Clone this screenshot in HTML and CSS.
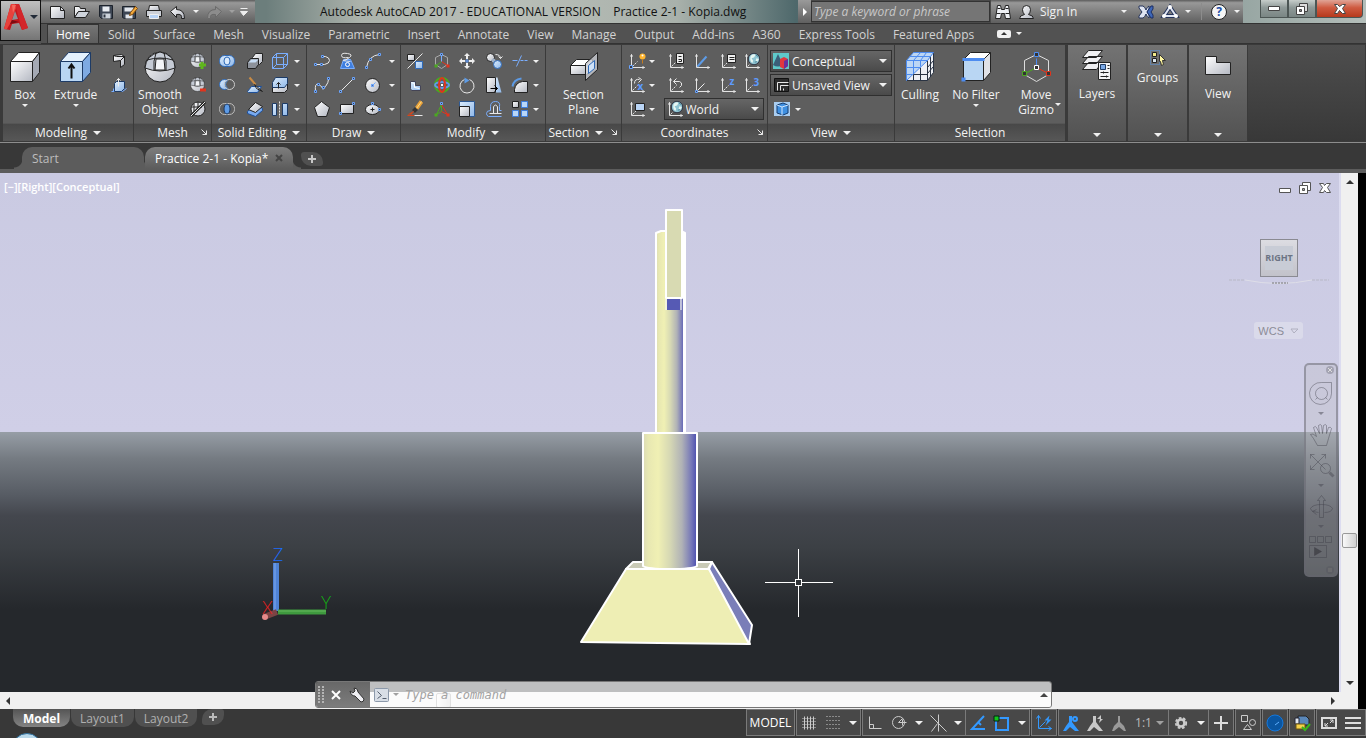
FILE: index.html
```
<!DOCTYPE html>
<html lang="en">
<head>
    <meta charset="UTF-8">
    <meta name="viewport" content="width=device-width, initial-scale=1.0">
    <title>Autodesk AutoCAD 2017</title>
    <link rel="stylesheet" href="styles.css">
</head>
<body>

<!-- shared gradients and symbols -->
<svg class="sprite" aria-hidden="true">
    <defs>
        <linearGradient id="metal" x1="0" y1="0" x2="1" y2="1"><stop offset="0" stop-color="#fff"/><stop offset="1" stop-color="#b4b8c2"/></linearGradient>
        <linearGradient id="ice" x1="0" y1="0" x2="1" y2="1"><stop offset="0" stop-color="#dcecfb"/><stop offset="1" stop-color="#8fb8ea"/></linearGradient>
        <linearGradient id="tube" x1="0" y1="0" x2="1" y2="0"><stop offset="0" stop-color="#dcdcb6"/><stop offset=".1" stop-color="#e8e8b2"/><stop offset=".28" stop-color="#f0f0b4"/><stop offset=".5" stop-color="#d6d8b4"/><stop offset=".72" stop-color="#b0b2b6"/><stop offset=".9" stop-color="#7476b8"/><stop offset="1" stop-color="#4a4db0"/></linearGradient>
        <symbol id="ucs" viewBox="0 0 16 16">
            <path d="M2 1V14H15M1 3l1-2 1 2M13 13l2 1-2 1" fill="none" stroke="#e4e4e4"/>
            <path d="M3 13l5-5" fill="none" stroke="#e4e4e4" stroke-dasharray="2 1"/>
        </symbol>
        <symbol id="globe" viewBox="0 0 16 16">
            <circle cx="8" cy="8" r="7" fill="#8fc4d2" stroke="#223"/>
            <path d="M4 4q4-3 6-1l-2 3-3 1 2 3-1 3q-4-3-2-9zM11 7l3 1-2 4-2-2z" fill="#e6f6f2"/>
            <path d="M10 3l3 2M9 12l3-1" stroke="#3e7f93" fill="none"/>
        </symbol>
        <symbol id="ball" viewBox="0 0 32 32">
            <circle cx="16" cy="16" r="15" fill="url(#metal)" stroke="#222"/>
            <path d="M1 17q15 6 30 0Q31 4 16 1 2 4 1 17z" fill="#c5cbd5" stroke="#222"/>
            <path d="M3 9q13-4 26 0M12 2q-3 8-2 17M20 2q3 8 2 17" fill="none" stroke="#222"/>
            <path d="M12 8h8l1 11H11z" fill="#f3f5f8" stroke="#222"/>
        </symbol>
    </defs>
</svg>

<div class="app">

<header class="header">
    <button class="app-button" aria-label="Application menu">
        <svg width="24" height="28" viewBox="0 0 24 28">
            <path d="M0 26L7 1h8l9 24-6 2-3-7-7 1-2 6z" fill="#c3161c"/>
            <path d="M7 1l4 0 1 4-5 14-4 7-3 0z" fill="#e8413b"/>
            <path d="M11 8l3 8-6 1z" fill="#8e9094"/>
            <path d="M11 1h4l9 24-6 2z" fill="#d3262a"/>
            <path d="M6 21l9-2-7-2z" fill="#7b0c10"/>
            <path d="M8 2l4 0-3 8z" fill="#f46a5f"/>
        </svg>
        <span class="caret dark"></span>
    </button>

    <div class="titlebar">
        <div class="quick">
            <button aria-label="New"><svg width="16" height="16" viewBox="-.5 -.5 16 16"><path d="M0 2h10l4 4v8H0z" class="m"/><path d="M10 2v4h4" class="k"/></svg></button>
            <button aria-label="Open"><svg width="16" height="16" viewBox="-.5 -.5 16 16"><path d="M0 13V2h5l1 2h5v3H4z" class="m"/><path d="M0 13L4 7h11l-4 6z" fill="#cfd4dc" stroke="#222"/></svg></button>
            <button aria-label="Save"><svg width="16" height="16" viewBox="-.5 -.5 16 16"><path d="M1 1h13v13H3l-2-2z" fill="#3d4654" stroke="#1c222b"/><path d="M4 2h7v5H4z" fill="#e8ebf0"/><path d="M4 9h8v5H4z" fill="#cdd3db"/><path d="M5 10h2v3H5z" fill="#2d3440"/></svg></button>
            <button aria-label="Save As"><svg width="16" height="16" viewBox="-.5 -.5 16 16"><path d="M0 2h13v12H2l-2-1z" fill="#3d4654" stroke="#1c222b"/><path d="M2 3h9v4H2zM3 10h7v4H3z" fill="#e2e6ec"/><path d="M7 11l1-3 5-6 2 2-5 6z" fill="#f2a93b" stroke="#7d4a10"/></svg></button>
            <button aria-label="Plot"><svg width="16" height="16" viewBox="-.5 -.5 16 16"><path d="M3 1h9l1 5H2z" class="m"/><path d="M0 6h15v6H0z" fill="#cdd1d8" stroke="#222"/><path d="M3 10h9v4H3z" fill="#b9d4f5" stroke="#eee"/></svg></button>
            <button aria-label="Undo"><svg width="16" height="16" viewBox="-.5 -.5 16 16"><path d="M0 7l6-5v3q8 0 8 9h-3q1-5-5-4v3z" class="m"/></svg></button>
            <button class="slim" aria-label="Undo list"><span class="caret"></span></button>
            <button aria-label="Redo"><svg width="16" height="16" viewBox="-.5 -.5 16 16"><path d="M15 7L9 2v3Q1 5 1 14h3q-1-5 5-4v3z" fill="#8c8c8c" stroke="#6a6a6a"/></svg></button>
            <button class="slim" aria-label="Redo list"><span class="caret dim"></span></button>
            <button class="slim" aria-label="Customize"><svg width="10" height="10" viewBox="-.5 -.5 10 10"><path d="M1 1h7M1 4h7L4 8z" fill="#eee" stroke="#eee"/></svg></button>
        </div>
        <h1 class="title">Autodesk AutoCAD 2017 - EDUCATIONAL VERSION &nbsp;&nbsp; Practice 2-1 - Kopia.dwg</h1>
        <div class="search">
            <button aria-label="Collapse search"><svg width="6" height="8" viewBox="0 0 6 8"><path d="M1 0l4 4-4 4z" fill="#fff"/></svg></button>
            <input type="text" aria-label="Search" placeholder="Type a keyword or phrase">
        </div>
        <div class="account">
            <button aria-label="Find"><svg width="16" height="16" viewBox="-.5 -.5 16 16"><path d="M2 1h3l1 4h3l1-4h3l2 13h-5l-1-5H6l-1 5H0z" fill="#eef0f4" stroke="#222"/><path d="M1 9h4M10 9h4M2 4h3M10 4h3" class="k"/></svg></button>
            <button class="sign-in"><svg width="16" height="16" viewBox="-.5 -.5 16 16"><path d="M0 14q0-3 5-4-2-2-2-5 0-4 4-4t4 4q0 3-2 5 5 1 5 4z" class="m"/></svg>Sign In</button>
            <button class="slim push" aria-label="Account menu"><span class="caret"></span></button>
            <button aria-label="Exchange"><svg width="16" height="14" viewBox="0 0 16 14"><path d="M1 1h4q2 1 3 4 1-3 3-4v3L9 7l2 3v3q-2-1-3-4-1 3-3 4H1v-2l3-4-3-4z" fill="#dfe5f2" stroke="#26355c"/><path d="M9 7l4-6h2v3l-2 3 2 3v3h-2z" fill="#3e67b8" stroke="#1d2f63"/></svg></button>
            <button aria-label="A360"><svg width="16" height="14" viewBox="0 0 16 14"><path d="M8 2L2 11h12z" fill="none" stroke="#26355c" stroke-width="4"/><path d="M8 2L2 11h12z" fill="none" stroke="#dfe5f2" stroke-width="2"/><circle cx="8" cy="2" r="2" fill="#fff"/><circle cx="2" cy="11" r="2" fill="#fff"/><circle cx="14" cy="11" r="2" fill="#fff"/></svg></button>
            <button class="slim" aria-label="A360 menu"><span class="caret"></span></button>
            <span class="divider"></span>
            <button class="help" aria-label="Help">?</button>
            <button class="slim" aria-label="Help menu"><span class="caret"></span></button>
        </div>
        <div class="window-buttons">
            <button aria-label="Minimize"><svg width="12" height="6" viewBox="-.5 -.5 12 6"><path d="M0 0h11v4H0z" fill="#fff" stroke="#444"/></svg></button>
            <button aria-label="Restore"><svg width="12" height="12" viewBox="-.5 -.5 12 12"><path d="M3 0h8v8H3z" fill="#ddd" stroke="#444"/><path d="M0 3h8v8H0z" fill="#fff" stroke="#444"/><path d="M3 6h2v2H3z" fill="#888" stroke="#444"/></svg></button>
            <button class="close" aria-label="Close"><svg width="12" height="10" viewBox="-.5 -.5 12 10"><path d="M0 0h3l2 2 3-2h3L8 4l3 5H8L5 6 3 9H0l3-5z" fill="#fff" stroke="#444"/></svg></button>
        </div>
    </div>

    <nav class="tabs">
        <a href="#" class="active">Home</a>
        <a href="#">Solid</a>
        <a href="#">Surface</a>
        <a href="#">Mesh</a>
        <a href="#">Visualize</a>
        <a href="#">Parametric</a>
        <a href="#">Insert</a>
        <a href="#">Annotate</a>
        <a href="#">View</a>
        <a href="#">Manage</a>
        <a href="#">Output</a>
        <a href="#">Add-ins</a>
        <a href="#">A360</a>
        <a href="#">Express Tools</a>
        <a href="#">Featured Apps</a>
        <button class="minimize" aria-label="Minimize ribbon"><svg width="14" height="8" viewBox="0 0 14 8"><rect width="14" height="8" rx="2" fill="#f0f0f0"/><path d="M4 5l3-3 3 3z" fill="#333"/></svg><span class="caret"></span></button>
    </nav>
</header>

<main class="ribbon">
    <section class="panel">
        <div class="body modeling">
            <button class="big"><svg width="32" height="32" viewBox="-.5 -.5 32 32"><path d="M1 10L9 1h21l-7 9z" fill="#fff" stroke="#222"/><path d="M1 10h22v20H1z" class="m"/><path d="M23 10l7-9v20l-7 9z" fill="#a4a9b4" stroke="#222"/></svg><span>Box</span><span class="caret"></span></button>
            <button class="big"><svg width="32" height="32" viewBox="-.5 -.5 32 32"><path d="M0 10L8 1h22l-8 9z" fill="#e4f1fd" stroke="#1d3b66"/><path d="M0 10h22v20H0z" fill="#b9d6f3" stroke="#1d3b66"/><path d="M22 10l8-9v20l-8 9z" fill="#7eaae2" stroke="#1d3b66"/><path d="M11 27V14M8 17l3-4 3 4" fill="none" stroke="#111" stroke-width="2"/></svg><span>Extrude</span><span class="caret"></span></button>
            <div class="tools one">
                <button aria-label="Polysolid"><svg width="16" height="16" viewBox="-.5 -.5 16 16"><path d="M2 2l8-1 3 2v8l-4 3V7L2 8z" class="m"/><path d="M2 2l3 1 8 0M9 7l4-4" class="k"/></svg></button>
                <button aria-label="Presspull"><svg width="16" height="16" viewBox="-.5 -.5 16 16"><path d="M0 14h11l4-3M2 14v-3" class="b"/><path d="M3 6l2-2h8v7l-3 3H3z" fill="url(#ice)" stroke="#1d3b66"/><path d="M7 9V1M5 3l2-2 2 2" class="l"/></svg></button>
            </div>
        </div>
        <h2>Modeling <span class="caret wide"></span></h2>
    </section>

    <section class="panel">
        <div class="body mesh">
            <button class="big"><svg width="32" height="32"><use href="#ball"/></svg><span>Smooth Object</span></button>
            <div class="tools one">
                <button aria-label="Smooth more"><svg width="16" height="16" viewBox="0 0 16 16"><use href="#ball" width="15" height="15"/><path d="M12 9v7M9 12h7" stroke="#5fb61c" stroke-width="3"/></svg></button>
                <button aria-label="Smooth less"><svg width="16" height="16" viewBox="0 0 16 16"><use href="#ball" width="15" height="15"/><path d="M10 13h6" stroke="#e0341d" stroke-width="3"/></svg></button>
                <button aria-label="Refine mesh"><svg width="16" height="16" viewBox="0 0 16 16"><circle cx="8" cy="8" r="7" class="m"/><path d="M4 3v10M8 1v7M2 6h10" class="k"/><path d="M1 15L15 1" stroke="#222" stroke-width="3"/><path d="M1 15L15 1" class="l"/></svg></button>
            </div>
        </div>
        <h2 class="spread"><span>Mesh</span><svg width="7" height="7" viewBox="-.5 -.5 7 7"><path d="M0 0l5 5M5 1v4H1" class="l"/></svg></h2>
    </section>

    <section class="panel">
        <div class="body tools solid">
            <button aria-label="Union"><svg width="16" height="16" viewBox="-.5 -.5 16 16"><rect x="0" y="2" width="15" height="11" rx="5" fill="url(#ice)" stroke="#2f6ab8"/><ellipse cx="7.5" cy="7.5" rx="3" ry="4" fill="#dcebfb" stroke="#2f6ab8"/></svg></button>
            <button aria-label="Imprint"><svg width="16" height="16" viewBox="-.5 -.5 16 16"><path d="M5 4l3-4h7v8l-3 3H5z" class="m"/><path d="M0 9l3-4h8v6l-3 4H0z" fill="#8d929b" stroke="#222"/><path d="M1 9l3-3h7L8 9z" fill="#c8ddf5"/></svg></button>
            <button aria-label="Extract edges"><svg width="16" height="16" viewBox="-.5 -.5 16 16"><path d="M0 4h11v11H0zM4 0h11v11H4zM0 4l4-4M11 4l4-4M0 15l4-4M11 15l4-4" class="b"/></svg></button>
            <button aria-label="More solid tools"><span class="caret"></span></button>
            <button aria-label="Subtract"><svg width="16" height="16" viewBox="-.5 -.5 16 16"><circle cx="5" cy="7" r="5" fill="url(#ice)" stroke="#2f6ab8"/><circle cx="10" cy="7" r="5" fill="#5c5c5c" stroke="#ccc"/><path d="M8 3q-4 4 0 8" stroke="#5d9be6" fill="none"/></svg></button>
            <button aria-label="Slice"><svg width="16" height="16" viewBox="-.5 -.5 16 16"><path d="M0 14l4-5h10l-4 6H1z" fill="url(#ice)" stroke="#1d4f99"/><path d="M2 0l6 7" stroke="#c98b45" stroke-width="2"/><path d="M7 7l8 7-6-3z" class="m"/></svg></button>
            <button aria-label="Offset faces"><svg width="16" height="16" viewBox="-.5 -.5 16 16"><path d="M0 8l3-3h12v7l-3 3H0z" class="m"/><path d="M0 5l3-5h12v6l-3 4H0z" fill="url(#ice)" stroke="#1d3b66"/><path d="M6 11V5M4 7l2-2 2 2" class="k"/></svg></button>
            <button aria-label="Face tools"><span class="caret"></span></button>
            <button aria-label="Intersect"><svg width="16" height="16" viewBox="-.5 -.5 16 16"><rect x="0" y="2" width="15" height="11" rx="5" fill="none" stroke="#bbb"/><ellipse cx="7.5" cy="7.5" rx="3" ry="5" fill="#5d9be6" stroke="#1d3b66"/></svg></button>
            <button aria-label="Thicken"><svg width="16" height="16" viewBox="-.5 -.5 16 16"><path d="M0 10l8-7 7 4v2l-7 6-8-3z" fill="#78aaf0" stroke="#1d4f99"/><path d="M1 8l7-7 7 4-7 6z" class="m"/></svg></button>
            <button aria-label="Separate"><svg width="16" height="16" viewBox="-.5 -.5 16 16"><path d="M0 2h4v12H0zM10 2h5v12h-5z" fill="url(#ice)" stroke="#1d3b66"/><path d="M7 0v16" class="l" stroke-dasharray="2 1"/></svg></button>
            <button aria-label="Body tools"><span class="caret"></span></button>
        </div>
        <h2>Solid Editing <span class="caret wide"></span></h2>
    </section>

    <section class="panel">
        <div class="body tools draw">
            <button aria-label="Polyline"><svg width="16" height="16" viewBox="-.5 -.5 16 16"><path d="M1 11h9q5-1 5-4t-4-4H8" class="l"/><path d="M0 10h2v2H0zM6 10h2v2H6zM7 2h2v2H7z" class="n"/></svg></button>
            <button aria-label="Helix"><svg width="16" height="16" viewBox="-.5 -.5 16 16"><path d="M4 6h7l4 9H1z" fill="#3f7fe0" stroke="#7aaeff"/><circle cx="8" cy="11" r="2" fill="none" stroke="#fff"/><path d="M9 4Q2 5 2 2t6-2 2 4-6 3 7 1" class="l"/></svg></button>
            <button aria-label="Arc"><svg width="16" height="16" viewBox="-.5 -.5 16 16"><path d="M1 14Q3 2 14 1" class="l"/><path d="M0 13h2v2H0zM4 5h2v2H4zM13 0h2v2h-2z" class="n"/></svg></button>
            <button aria-label="Arc list"><span class="caret"></span></button>
            <button aria-label="Spline"><svg width="16" height="16" viewBox="-.5 -.5 16 16"><path d="M1 14Q0 5 4 7t4 4 3-2 3-7" class="l"/><path d="M0 13h2v2H0zM3 6h2v2H3zM8 9h2v2H8zM13 0h2v2h-2z" class="n"/></svg></button>
            <button aria-label="Line"><svg width="16" height="16" viewBox="-.5 -.5 16 16"><path d="M1 14L14 1" class="l"/><path d="M0 13h2v2H0zM13 0h2v2h-2z" class="n"/></svg></button>
            <button aria-label="Circle"><svg width="16" height="16" viewBox="-.5 -.5 16 16"><circle cx="7" cy="8" r="7" class="m"/><path d="M7 8l3-3M6 7h2v2H6z" class="n"/></svg></button>
            <button aria-label="Circle list"><span class="caret"></span></button>
            <button aria-label="Polygon"><svg width="16" height="16" viewBox="-.5 -.5 16 16"><path d="M7 0l8 6-3 9H3L0 6z" class="m"/></svg></button>
            <button aria-label="Rectangle"><svg width="16" height="16" viewBox="-.5 -.5 16 16"><path d="M1 3h13v9H1z" class="m"/><path d="M0 11h2v2H0zM13 1h2v2h-2z" class="n"/></svg></button>
            <button aria-label="Ellipse"><svg width="16" height="16" viewBox="-.5 -.5 16 16"><ellipse cx="7" cy="8" rx="7" ry="5" class="m"/><path d="M5 8h4M7 6v4" class="k"/><path d="M6 1h2v2H6zM13 7h2v2h-2z" class="n"/></svg></button>
            <button aria-label="Ellipse list"><span class="caret"></span></button>
        </div>
        <h2>Draw <span class="caret wide"></span></h2>
    </section>

    <section class="panel">
        <div class="body tools modify">
            <button aria-label="3D align"><svg width="16" height="16" viewBox="-.5 -.5 16 16"><path d="M0 1h7v6H0z" class="m"/><path d="M8 8h7v7H8z" fill="url(#ice)" stroke="#2f6ab8"/><path d="M0 15L15 0" class="l"/></svg></button>
            <button aria-label="3D move"><svg width="16" height="16" viewBox="-.5 -.5 16 16"><path d="M7 1l6 3v7l-6 4-6-4V4z" fill="none" stroke="#aaa"/><path d="M7 8l-5 4" stroke="#4ba820"/><path d="M7 8l6 4" stroke="#e0341d"/><path d="M7 8V2" stroke="#7aaeff"/><path d="M6 0h2v2H6z" class="n"/><path d="M0 11h3v3H0z" fill="#4ba820"/><path d="M12 11h3v3h-3z" fill="#e0341d"/></svg></button>
            <button aria-label="Move"><svg width="16" height="16" viewBox="0 0 16 16"><path d="M8 0l3 3H9v3H7V3H5zM8 16l3-3H9v-3H7v3H5zM0 8l3-3v2h3v2H3v2zM16 8l-3-3v2h-3v2h3v2z" fill="#eee"/><path d="M7 7h2v2H7z" class="n"/></svg></button>
            <button aria-label="Copy"><svg width="16" height="16" viewBox="-.5 -.5 16 16"><circle cx="4" cy="4" r="4" class="m"/><circle cx="7" cy="7" r="2" fill="#9fb0c6"/><circle cx="11" cy="11" r="4" fill="url(#ice)" stroke="#2f6ab8"/><path d="M9 1q5 0 5 4M12 3l2 2 2-2" class="l"/></svg></button>
            <button aria-label="Trim"><svg width="16" height="16" viewBox="-.5 -.5 16 16"><path d="M0 7h5M4 13L9 2" class="b"/><path d="M8 7h8" class="b" stroke-dasharray="3 1"/></svg></button>
            <button aria-label="Trim list"><span class="caret"></span></button>
            <button aria-label="3D mirror"><svg width="16" height="16" viewBox="-.5 -.5 16 16"><path d="M3 4h5v4h5v5H4l-1-2z" fill="url(#ice)" stroke="#445"/><path d="M4 5l3 1v4l5 1" stroke="#fff" fill="none"/></svg></button>
            <button aria-label="3D rotate"><svg width="16" height="16" viewBox="0 0 16 16"><circle cx="8" cy="8" r="7" fill="none" stroke="#4ba820" stroke-width="2"/><ellipse cx="8" cy="8" rx="7" ry="3" fill="none" stroke="#5d9be6" stroke-width="2"/><ellipse cx="8" cy="8" rx="3" ry="7" fill="none" stroke="#e0341d" stroke-width="2"/><path d="M7 7h2v2H7z" fill="#fff"/></svg></button>
            <button aria-label="Rotate"><svg width="16" height="16" viewBox="-.5 -.5 16 16"><path d="M5 2a7 7 0 1 0 5 0" class="l"/><path d="M5 0l5 3-5 3z" fill="#5d9be6"/></svg></button>
            <button aria-label="Stretch"><svg width="16" height="16" viewBox="-.5 -.5 16 16"><path d="M8 0h3l4 15H8z" fill="url(#ice)"/><path d="M0 0h9v15H0z" class="m"/><path d="M4 11h7M8 8l3 3-3 3" stroke="#000" fill="none"/></svg></button>
            <button aria-label="Fillet"><svg width="16" height="16" viewBox="-.5 -.5 16 16"><path d="M2 15V12q1-7 8-8h5v11z" class="m"/><path d="M0 9q1-7 9-8" stroke="#5d9be6" fill="none" stroke-width="2"/></svg></button>
            <button aria-label="Fillet list"><span class="caret"></span></button>
            <button aria-label="Erase"><svg width="16" height="16" viewBox="-.5 -.5 16 16"><path d="M14 0L9 7" stroke="#e9a13a" stroke-width="4"/><path d="M14 0L9 7" stroke="#ffe08a"/><path d="M9 7l-3 3" stroke="#333" stroke-width="4"/><path d="M7 9l-3 4H0z" fill="#d6451b"/><path d="M0 14h7" stroke="#d6451b"/><path d="M7 14h8" class="l"/></svg></button>
            <button aria-label="3D scale"><svg width="16" height="16" viewBox="-.5 -.5 16 16"><path d="M7 3v7l-5 3M7 3L2 13" stroke="#4ba820" fill="none"/><path d="M7 3l6 10-6-3" stroke="#e0341d" fill="none"/><path d="M6 1h2v2H6z" class="n"/><path d="M0 12h3v3H0z" fill="#4ba820"/><path d="M12 12h3v3h-3z" fill="#e0341d"/></svg></button>
            <button aria-label="Scale"><svg width="16" height="16" viewBox="-.5 -.5 16 16"><path d="M0 0h15v15H0z" fill="url(#ice)" stroke="#2f5a94"/><path d="M0 5h10v10H0z" class="m"/></svg></button>
            <button aria-label="Offset"><svg width="16" height="16" viewBox="-.5 -.5 16 16"><path d="M15 15H2q-2-1-2-3 0-3 4-3V5q0-5 5-5t4 5v4h2" class="b"/><path d="M15 12H3M7 12V5q2-3 4 0v7" class="l"/></svg></button>
            <button aria-label="Array"><svg width="16" height="16" viewBox="-.5 -.5 16 16"><path d="M0 0h6v6H0z" class="m"/><path d="M9 0h6v6H9zM0 9h6v6H0zM9 9h6v6H9z" fill="#b9d6f8" stroke="#3f7fe0"/></svg></button>
            <button aria-label="Array list"><span class="caret"></span></button>
        </div>
        <h2>Modify <span class="caret wide"></span></h2>
    </section>

    <section class="panel">
        <div class="body section">
            <button class="big"><svg width="32" height="32" viewBox="-.5 -.5 32 32"><path d="M2 14l6-6h16v10l-6 5H2z" fill="#fff" stroke="#222"/><path d="M2 14h15v9H2z" class="m"/><path d="M17 12L29 1v17L17 29z" fill="#c9ccd2" fill-opacity=".8" stroke="#222"/><path d="M20 14l6-5v8l-6 5z" fill="#cfe2f8" stroke="#2f6ab8"/></svg><span>Section Plane</span></button>
        </div>
        <h2>Section <span class="caret wide"></span><svg class="launcher" width="7" height="7" viewBox="-.5 -.5 7 7"><path d="M0 0l5 5M5 1v4H1" class="l"/></svg></h2>
    </section>

    <section class="panel">
        <div class="body tools coords">
            <button aria-label="UCS"><svg width="16" height="16" viewBox="-.5 -.5 16 16"><use href="#ucs" width="16" height="16"/><path d="M0 12h3v3H0z" class="n"/><circle cx="13" cy="3" r="3" fill="#ffb52e"/><circle cx="13" cy="2" r="1" fill="#fff"/><path d="M13 6v4" stroke="#c67b1e"/></svg></button>
            <button class="start" aria-label="UCS list"><span class="caret"></span></button>
            <button aria-label="Named UCS"><svg width="16" height="16" viewBox="-.5 -.5 16 16"><use href="#ucs" width="16" height="16"/><path d="M8 0h7v10H8z" fill="#eee" stroke="#222"/><path d="M10 3h3M10 6h3v2h-3" class="k"/></svg></button>
            <button aria-label="View UCS"><svg width="16" height="16" viewBox="-.5 -.5 16 16"><use href="#ucs" width="16" height="16"/><path d="M3 13L12 3" stroke="#5d9be6" stroke-width="2"/></svg></button>
            <button aria-label="UCS properties"><svg width="16" height="16" viewBox="-.5 -.5 16 16"><use href="#ucs" width="16" height="16"/><path d="M7 1h8v8H7z" fill="#eee" stroke="#222"/><path d="M9 4h5M9 6h5" class="k"/></svg></button>
            <button aria-label="World UCS"><svg width="16" height="16" viewBox="-.5 -.5 16 16"><use href="#ucs" width="16" height="16"/><use href="#globe" x="3" y="-1" width="13" height="13"/></svg></button>
            <button aria-label="Rotate X"><svg width="16" height="16" viewBox="-.5 -.5 16 16"><use href="#ucs" width="16" height="16"/><path d="M5 6q0-5 5-4M9 0l3 2-3 3" class="l"/><text x="8" y="12" class="t">x</text></svg></button>
            <button class="start" aria-label="Rotate list"><span class="caret"></span></button>
            <button aria-label="Previous UCS"><svg width="16" height="16" viewBox="-.5 -.5 16 16"><use href="#ucs" width="16" height="16"/><path d="M5 4h6q3 1 2 4l-2 2M8 1L5 4l3 3" class="l"/></svg></button>
            <button aria-label="Origin"><svg width="16" height="16" viewBox="-.5 -.5 16 16"><use href="#ucs" width="16" height="16"/><path d="M3 13l7-7" stroke="#eee"/><path d="M1 13h2v2H1z" class="n"/></svg></button>
            <button aria-label="Z axis vector"><svg width="16" height="16" viewBox="-.5 -.5 16 16"><use href="#ucs" width="16" height="16"/><text x="9" y="7" class="t">z</text></svg></button>
            <button aria-label="3-Point"><svg width="16" height="16" viewBox="-.5 -.5 16 16"><use href="#ucs" width="16" height="16"/><text x="9" y="8" class="t">3</text></svg></button>
            <button aria-label="Face UCS"><svg width="16" height="16" viewBox="-.5 -.5 16 16"><use href="#ucs" width="16" height="16"/><path d="M6 2h9v7H6z" fill="#b9d4f5" stroke="#222"/></svg></button>
            <button class="start" aria-label="Face list"><span class="caret"></span></button>
            <div class="combo world">
                <svg width="16" height="16" viewBox="-.5 -.5 16 16"><use href="#ucs" width="16" height="16"/><use href="#globe" x="3" y="-1" width="13" height="13"/></svg>
                <select aria-label="Current UCS"><option>World</option></select>
                <span class="caret wide"></span>
            </div>
        </div>
        <h2 class="spread"><span>Coordinates</span><svg width="7" height="7" viewBox="-.5 -.5 7 7"><path d="M0 0l5 5M5 1v4H1" class="l"/></svg></h2>
    </section>

    <section class="panel">
        <div class="body view">
            <div class="combo">
                <svg width="16" height="16" viewBox="0 0 16 16"><path d="M0 0h16v16H0z" fill="#5fc9c9"/><path d="M5 1l5 11q-5 3-10 0z" fill="#3b5f78"/><path d="M7 6l4-2 4 2v7l-4 3-4-2z" fill="#e0383e"/><path d="M11 8l4-2v7l-4 3z" fill="#6a2f9c"/></svg>
                <select aria-label="Visual style"><option>Conceptual</option></select>
                <span class="caret wide"></span>
            </div>
            <div class="combo">
                <svg width="16" height="16" viewBox="-.5 -.5 16 16"><path d="M1 1h14v13H1z" fill="#2c2c2c" stroke="#111"/><path d="M4 13V5h11M7 13V8h8M10 13v-2" class="l"/></svg>
                <select aria-label="Saved view"><option>Unsaved View</option></select>
                <span class="caret wide"></span>
            </div>
            <div class="view-row">
                <button aria-label="Viewport"><svg width="16" height="14" viewBox="0 0 16 14"><path d="M0 0h16v14H0z" fill="#a9cdf0"/><path d="M3 3l6-2 5 2v8l-5 2-6-2z" fill="#3e8fe0" stroke="#153d70"/><path d="M3 3l5 2 6-2M8 5v8" stroke="#cfe6ff" fill="none"/></svg></button>
                <span class="caret"></span>
            </div>
        </div>
        <h2>View <span class="caret wide"></span></h2>
    </section>

    <section class="panel">
        <div class="body selection">
            <button class="big"><svg width="32" height="32" viewBox="-.5 -.5 32 32"><path d="M2 9L9 1h20l-6 8v20H2z" fill="#bcd6f4"/><path d="M2 29L23 9l6-8v20l-6 8z" fill="#eef0f4"/><path d="M9 22v7M16 16v13M23 9v20M2 29h21M9 23h14M23 22l6-7M29 1v20l-6 8M26 5v20M23 16l6-7" fill="none" stroke="#2a3342"/><path d="M2 9h21M2 9v20M2 16h14M2 23h6M9 9v13M16 9v6M2 9L9 1h20l-6 8M9 9l7-8M16 9l6-8M5 5h21M2 29L23 9" fill="none" stroke="#4d8cf0"/></svg><span>Culling</span></button>
            <button class="big"><svg width="32" height="32" viewBox="-.5 -.5 32 32"><path d="M3 8l7-7h20l-7 7z" fill="#fff" stroke="#222"/><path d="M3 8h20v21H3z" fill="#b9d6f3" stroke="#222"/><path d="M23 8l7-7v20l-7 8z" fill="#dfe1e6" stroke="#222"/><path d="M2 8h22" stroke="#4d8cf0" stroke-width="3"/><path d="M1 26h4v4H1z" fill="#4d8cf0"/></svg><span>No Filter</span><span class="caret"></span></button>
            <button class="big gizmo"><svg width="32" height="32" viewBox="-.5 -.5 32 32"><path d="M16 3l12 6v14l-12 7L4 23V9z" fill="none" stroke="#ddd"/><path d="M16 16v-9" stroke="#4d8cf0"/><path d="M16 16L5 22" stroke="#4ba820"/><path d="M16 16l12 6" stroke="#e0341d"/><path d="M14 1h4v4h-4z" fill="#333" stroke="#4d8cf0"/><path d="M2 20h4v4H2z" fill="#333" stroke="#4ba820"/><path d="M26 20h4v4h-4z" fill="#333" stroke="#e0341d"/><path d="M14 14h4v4h-4z" fill="#333" stroke="#fff"/></svg><span>Move Gizmo</span></button>
            <span class="caret gizmo-caret"></span>
        </div>
        <h2>Selection</h2>
    </section>

    <button class="folded"><svg width="30" height="32" viewBox="-.5 -.5 30 32"><path d="M0 19l6-7h14l-6 7zM0 13l6-7h14l-6 7zM0 7l6-7h14l-6 7z" fill="#f0f0f2" stroke="#222"/><path d="M16 12h12v17H16z" fill="#f4f4f6" stroke="#222"/><path d="M18 14h5v5h-5z" fill="#7aa9e8" stroke="#1d3b66"/><path d="M25 15h2M25 18h2M18 22h8M18 26h8M21 21v2M24 25v2" class="k"/></svg><span>Layers</span><span class="caret wide"></span></button>
    <button class="folded"><svg width="16" height="16" viewBox="-.5 -.5 16 16"><path d="M0 0h9v14H0z" fill="none" stroke="#5d9be6" stroke-dasharray="1 1"/><path d="M2 2h4v4H2z" fill="#f4ec8a" stroke="#222"/><path d="M2 8h4v4H2z" fill="#dce8f2" stroke="#222"/><path d="M9 4l6 6h-3l1 4-2 1-1-4H9z" fill="#fff7a0" stroke="#333"/></svg><span>Groups</span><span class="caret wide"></span></button>
    <button class="folded"><svg width="28" height="32" viewBox="-.5 -.5 28 32"><path d="M1 6h11v6h14v12H1z" class="m"/></svg><span>View</span><span class="caret wide"></span></button>
    <div class="rest"></div>
</main>

<nav class="doc-tabs">
    <button class="doc start-tab">Start</button>
    <button class="doc current">Practice 2-1 - Kopia* <svg width="8" height="8" viewBox="0 0 8 8"><path d="M1 1l6 6M7 1L1 7" stroke="#444" stroke-width="2"/></svg></button>
    <button class="add" aria-label="New tab"><svg width="8" height="8" viewBox="0 0 8 8"><path d="M4 0v8M0 4h8" stroke="#c8c8c8" stroke-width="2"/></svg></button>
</nav>

<div class="workspace">
    <div class="viewport">
        <svg class="scene" viewBox="0 0 1339 519" preserveAspectRatio="xMidYMid meet" role="img" aria-label="3D model">
            <!-- model -->
            <g stroke="#fff" stroke-width="2" stroke-linejoin="round">
                <path d="M656 260V60l5-2h20l4 2V260z" fill="url(#tube)"/>
                <path d="M684 60V260" fill="none"/>
                <path d="M666 37h16v88h-16z" fill="#d8dab2"/>
                <path d="M626 396l7-7h79l-4 7z" fill="#c9cab6"/>
                <path d="M643 260h54v133q-4 3-27 3t-27-3z" fill="url(#tube)"/>
                <path d="M626 396h83l41 75-1 0-90-1-78-1z" fill="#eeeeb4"/>
                <path d="M709 396l3-7 40 63-3 19z" fill="#7a7eb8"/>
            </g>
            <path d="M667 126h13v11h-13z" fill="#565ab4"/>
            <path d="M681 126v11M666 126v11" stroke="#fff"/>
            <!-- crosshair -->
            <g fill="none" stroke="#fff" shape-rendering="crispEdges">
                <path d="M765 409.5h30M802 409.5h31M798.5 376v30M798.5 413v31"/>
                <path d="M795.5 406.5h6v6h-6z"/>
            </g>
            <!-- ucs icon -->
            <path d="M276 390v48" stroke="#4f83d6" stroke-width="6"/>
            <path d="M275 390v48" stroke="#7ea8ee" stroke-width="1"/>
            <path d="M278 439h48" stroke="#3f9a3f" stroke-width="5"/>
            <path d="M278 438h48" stroke="#66b85e" stroke-width="1"/>
            <path d="M277 439l-13 5" stroke="#7c4444" stroke-width="6"/>
            <circle cx="265" cy="444" r="3" fill="#e58a8a"/>
            <text x="273" y="388" class="axis" fill="#1a6dff">Z</text>
            <text x="321" y="436" class="axis" fill="#12b312">Y</text>
            <text x="262" y="441" class="axis" fill="#e82020">X</text>
        </svg>
        <div class="view-label">[−][Right][Conceptual]</div>
        <div class="view-buttons">
            <button aria-label="Minimize view"><svg width="14" height="12" viewBox="-.5 -.5 14 12"><path d="M1 6h11v4H1z" fill="#fff" stroke="#555"/></svg></button>
            <button aria-label="Restore view"><svg width="14" height="12" viewBox="-.5 -.5 14 12"><path d="M4 0h8v8H4z" fill="#fff" stroke="#555"/><path d="M1 3h8v8H1z" fill="#fff" stroke="#555"/><path d="M4 6h2v2H4z" fill="#aaa" stroke="#555"/></svg></button>
            <button aria-label="Close view"><svg width="14" height="12" viewBox="-.5 -.5 14 12"><path d="M1 1h4l1 2 2-2h4L9 5l3 5H8L6 8l-1 2H1l3-5z" fill="#fff" stroke="#555"/></svg></button>
        </div>
        <div class="cube-area">
            <button class="cube"><span>RIGHT</span></button>
            <svg class="compass" width="102" height="10" viewBox="0 0 102 10"><path d="M1 3h16M84 3h17" stroke="#b8b8c6" stroke-dasharray="3 1"/><path d="M17 3q34 7 67 0" stroke="#dedee8" fill="none"/><path d="M44 6h16" stroke="#777" stroke-dasharray="2 1"/></svg>
        </div>
        <button class="wcs">WCS <svg width="9" height="6" viewBox="0 0 9 6"><path d="M1 1h7L4 5z" fill="none" stroke="#b0b0c0"/></svg></button>
        <div class="navbar">
            <button class="dot" aria-label="Close bar"><svg width="8" height="8" viewBox="0 0 8 8"><circle cx="4" cy="4" r="4"/><path d="M2 2l4 4M6 2L2 6" stroke="#ddd"/></svg></button>
            <button aria-label="Steering wheel"><svg width="24" height="24" viewBox="-.5 -.5 24 24"><path d="M12 1h10v11a11 11 0 1 1-10-11z"/><circle cx="12" cy="12" r="6"/><path d="M6 18l2-2M18 18l-2-2"/></svg></button>
            <span class="caret"></span>
            <button aria-label="Pan"><svg width="24" height="24" viewBox="-.5 -.5 24 24"><path d="M8 23l-4-7-3-4q2-2 6 2L4 5q2-2 3 0l3 6-1-8q2-2 3 0l1 8 1-8q2-2 3 0v8l2-6q2-1 3 1l-3 10-2 7z"/></svg></button>
            <button aria-label="Zoom"><svg width="24" height="24" viewBox="-.5 -.5 24 24"><path d="M1 1l15 15M1 16L16 1M1 5V1h4M12 1h4v4M1 12v4h4"/><circle cx="16" cy="15" r="5"/><path d="M20 19l4 4" stroke-width="3"/></svg></button>
            <span class="caret"></span>
            <button aria-label="Orbit"><svg width="24" height="24" viewBox="-.5 -.5 24 24"><path d="M10 23V6H8l4-5 4 5h-2v17z"/><path d="M9 18q-8-1-8-4 2-4 11-4t11 4q-1 4-8 4M7 15l-4 2 4 3"/></svg></button>
            <span class="caret"></span>
            <button aria-label="ShowMotion"><svg width="24" height="24" viewBox="-.5 -.5 24 24"><path d="M0 1h6v6H0zM8 1h6v6H8zM16 1h6v6h-6zM0 10h17v12H0z"/><path d="M5 12l7 4-7 4z" class="play"/></svg></button>
            <button class="dot last" aria-label="Bar options"><svg width="8" height="8" viewBox="0 0 8 8"><circle cx="4" cy="4" r="4"/><path d="M2 3h4M2 5h4" stroke="#777"/></svg></button>
        </div>
    </div>
    <div class="scroll vertical">
        <svg width="8" height="4" viewBox="0 0 8 4"><path d="M0 4l4-4 4 4z" fill="#333"/></svg>
        <span class="track before"></span>
        <span class="thumb"></span>
        <span class="track after"></span>
        <svg width="8" height="4" viewBox="0 0 8 4"><path d="M0 0l4 4 4-4z" fill="#333"/></svg>
    </div>
    <div class="scroll horizontal">
        <svg width="4" height="8" viewBox="0 0 4 8"><path d="M4 0L0 4l4 4z" fill="#333"/></svg>
        <span class="track left"></span>
        <span class="thumb"></span>
        <span class="track right"></span>
        <svg width="4" height="8" viewBox="0 0 4 8"><path d="M0 0l4 4-4 4z" fill="#333"/></svg>
    </div>
    <div class="command">
        <div class="handle">
            <svg width="6" height="18" viewBox="0 0 6 18"><path d="M1 0v18M5 0v18" stroke="#b5b5b5" stroke-width="2" stroke-dasharray="2 1"/></svg>
            <button aria-label="Close command line"><svg width="10" height="10" viewBox="0 0 10 10"><path d="M1 1l8 8M9 1L1 9" stroke="#fff" stroke-width="2"/></svg></button>
            <button aria-label="Customize command line"><svg width="14" height="14" viewBox="0 0 14 14"><path d="M0 3l3 2 2-2-1-3q4 0 4 4l6 7q0 3-3 3L5 8Q1 8 0 3z" fill="#f0f0f4" stroke="#333"/></svg></button>
        </div>
        <div class="prompt">
            <svg width="15" height="14" viewBox="-.5 -.5 15 14"><rect width="14" height="13" rx="1" fill="#d8dee6" stroke="#8c99aa"/><path d="M3 3l4 4-4 3M8 10h4" fill="none" stroke="#555f6e"/></svg>
            <span class="caret grey"></span>
            <input type="text" aria-label="Command" placeholder="Type a command">
            <svg width="8" height="5" viewBox="0 0 8 5"><path d="M0 5l4-4 4 4z" fill="#444"/></svg>
        </div>
    </div>
</div>

<footer class="footer">
    <div class="layouts">
        <button class="layout model">Model</button>
        <button class="layout">Layout1</button>
        <button class="layout">Layout2</button>
        <button class="layout plus" aria-label="New layout"><svg width="8" height="8" viewBox="0 0 8 8"><path d="M4 0v8M0 4h8" stroke="#bbb" stroke-width="2"/></svg></button>
    </div>
    <div class="orb"></div>
    <div class="status">
        <div class="group"><button class="space">MODEL</button></div>
        <div class="group">
            <button aria-label="Grid"><svg width="16" height="16" viewBox="-.5 -.5 16 16"><path d="M3 1v13M6 1v13M9 1v13M12 1v13" stroke="#ccc"/><path d="M1 3h13M1 6h13M1 9h13M1 12h13" stroke="#ccc" stroke-dasharray="1 1"/></svg></button>
            <button aria-label="Snap"><svg width="16" height="16" viewBox="-.5 -.5 16 16"><path d="M1 1h14M1 5h14M1 9h14M1 13h14" stroke="#ccc" stroke-dasharray="1 2"/></svg></button>
            <button class="slim" aria-label="Snap list"><span class="caret wide"></span></button>
        </div>
        <div class="group">
            <button aria-label="Ortho"><svg width="16" height="16" viewBox="-.5 -.5 16 16"><path d="M2 1v12h12M2 9h4v4" stroke="#ccc" fill="none"/></svg></button>
            <button aria-label="Polar"><svg width="16" height="16" viewBox="-.5 -.5 16 16"><circle cx="7" cy="7" r="6" fill="none" stroke="#ccc"/><path d="M7 7h8M7 7l4-4M11 4v6" stroke="#ccc" fill="none"/></svg></button>
            <button class="slim" aria-label="Polar list"><span class="caret wide"></span></button>
            <button aria-label="Isodraft"><svg width="18" height="18" viewBox="-.5 -.5 18 18"><path d="M1 1l16 16M9 0v17M8 9l-6 8" stroke="#ccc" fill="none"/></svg></button>
            <button class="slim" aria-label="Isodraft list"><span class="caret wide"></span></button>
        </div>
        <div class="group joined">
            <button aria-label="Object snap tracking"><svg width="16" height="16" viewBox="0 0 16 16"><path d="M14 1L2 14h13" class="on"/><path d="M8 7l3 3" class="on"/></svg></button>
            <button aria-label="Object snap"><svg width="16" height="16" viewBox="0 0 16 16"><path d="M2 3h12v12H2z" class="on"/><path d="M0 1h5v5H0z" fill="#12c41a" stroke="#021"/></svg></button>
            <button class="slim" aria-label="Object snap list"><span class="caret wide"></span></button>
        </div>
        <div class="group">
            <button aria-label="Dynamic UCS"><svg width="16" height="16" viewBox="-.5 -.5 16 16"><path d="M2 0v13h13M3 12l6-6M0 3l2-3 2 3M12 11l3 2-3 2" fill="none" stroke="#3399ff"/><path d="M13 0L8 5h3l-2 5 6-6h-3z" fill="#3399ff"/></svg></button>
        </div>
        <div class="group">
            <button aria-label="Annotation visibility"><svg width="16" height="16" viewBox="0 0 16 16"><path d="M6 1v6l-3 4-3 5h3l4-4 5 4h4l-4-5-3-4V1z" fill="#3399ff"/><circle cx="12" cy="4" r="2" class="on"/></svg></button>
            <button aria-label="Auto scale"><svg width="16" height="16" viewBox="0 0 16 16"><path d="M6 1v6l-3 4-3 5h3l4-4 5 4h4l-4-5-3-4V1zM14 0l-4 4h3l-1 4 4-4h-2z" fill="#c8c8c8"/></svg></button>
            <button aria-label="Annotation scale"><svg width="16" height="16" viewBox="0 0 16 16"><path d="M7 1v6l-4 4-2 5h2l5-4 5 4h2l-2-5-4-4V1z" fill="#999"/></svg></button>
            <button class="ratio">1:1<span class="caret wide grey"></span></button>
        </div>
        <div class="group joined">
            <button aria-label="Workspace"><svg width="14" height="14" viewBox="0 0 16 16"><circle cx="8" cy="8" r="4" fill="none" stroke="#ccc" stroke-width="3"/><circle cx="8" cy="8" r="6" fill="none" stroke="#ccc" stroke-width="2" stroke-dasharray="3 2"/></svg></button>
            <button class="slim" aria-label="Workspace list"><span class="caret wide"></span></button>
        </div>
        <div class="group joined"><button aria-label="Annotation monitor"><svg width="14" height="14" viewBox="0 0 14 14"><path d="M7 0v14M0 7h14" stroke="#ddd" stroke-width="2"/></svg></button></div>
        <div class="group"><button aria-label="Isolate objects"><svg width="16" height="16" viewBox="-.5 -.5 16 16"><path d="M1 0h6v6H1zM7 9l4 5H3z" fill="none" stroke="#ccc"/><circle cx="12" cy="7" r="3" fill="none" stroke="#ccc"/></svg></button></div>
        <div class="group"><button aria-label="Hardware acceleration"><svg width="18" height="18" viewBox="0 0 18 18"><circle cx="9" cy="9" r="8" fill="#0a55a0" stroke="#1478dc"/><path d="M9 11l4-3" stroke="#5fb0ff"/></svg></button></div>
        <div class="group"><button class="file-state" aria-label="Drawing status"><svg width="16" height="16" viewBox="0 0 16 16"><path d="M4 1h8l3 3v6H4z" fill="#5a87b8" stroke="#222"/><path d="M1 3h4v6H1z" fill="#dfe6ee" stroke="#223"/><path d="M2 9h9v5H2z" fill="#f6d24a" stroke="#6b5410"/><path d="M8 12l3 3 5-6" fill="none" stroke="#39b51c" stroke-width="2"/></svg></button></div>
        <div class="group">
            <button aria-label="Clean screen"><svg width="16" height="12" viewBox="0 0 16 12"><path d="M1 1h14v10H1z" fill="none" stroke="#ddd" stroke-width="2"/><path d="M4 9l3-3M4 6v3h3M9 6l3-3M9 3h3v3" stroke="#ddd" fill="none"/></svg></button>
            <button aria-label="Customization"><svg width="16" height="14" viewBox="0 0 16 14"><path d="M0 2h16M0 7h16M0 12h16" stroke="#ddd" stroke-width="2"/></svg></button>
        </div>
    </div>
</footer>

</div>

</body>
</html>
```
FILE: styles.css
```
* {
    box-sizing: border-box;
}
body {
    margin: 0;
    font-family: "Open Sans", "Noto Sans", sans-serif;
    font-size: 12px;
    color: #f2f2f2;
    background: #383838;
}
button {
    display: flex;
    align-items: center;
    justify-content: center;
    padding: 0;
    border: none;
    background: none;
    color: inherit;
    font: inherit;
    cursor: pointer;
}
input, select {
    font: inherit;
    color: inherit;
    border: none;
    background: none;
    padding: 0;
    min-width: 0;
}
svg {
    display: block;
    flex: none;
    overflow: visible;
}
.sprite {
    position: absolute;
    width: 0;
    height: 0;
    overflow: hidden;
}
.app {
    display: flex;
    flex-direction: column;
    height: 100vh;
    overflow: hidden;
}

/* icon strokes */
.m { fill: url(#metal); stroke: #222; }
.k { fill: none; stroke: #222; }
.l { fill: none; stroke: #e8e8e8; }
.b { fill: none; stroke: #7aaeff; }
.n { fill: #3a3f48; stroke: #6aa5ff; }
.t { fill: #5d9bff; font-size: 10px; font-weight: bold; }
.on { fill: none; stroke: #3399ff; stroke-width: 2; }

.caret {
    width: 0;
    height: 0;
    border: 3px solid transparent;
    border-top-color: #f0f0f0;
    border-bottom: none;
    flex: none;
}
.caret.wide {
    border-width: 4px;
    border-bottom: none;
}
.caret.dark {
    border-width: 4px;
    border-bottom: none;
    border-top-color: #222b38;
}
.caret.dim, .caret.grey {
    border-top-color: #a0a0a0;
}

/* title bar and tabs */
.header {
    display: grid;
    grid-template-columns: 41px 1fr;
    grid-template-rows: 24px 20px;
    background: #525252;
}
.app-button {
    grid-row: 1 / 3;
    height: 41px;
    gap: 2px;
    padding-bottom: 8px;
    border: 1px solid #111;
    background: linear-gradient(#c0c0c0, #757575);
}
.titlebar {
    display: flex;
    border-bottom: 1px solid #333;
    background: linear-gradient(90deg, #6c7e7c, #6c7e7c 17%, #abb2ab 24%, #b9bfb8 35%, #a9b1ab 48%, #4e686b 57%, #8f9f9c 88%, #b4beba);
}
.quick {
    display: flex;
    align-items: center;
    width: 214px;
    padding-left: 5px;
    background: linear-gradient(#5c5c5c, #989898 12%, #5f5f5f);
}
.quick button, .account button {
    width: 24px;
    height: 23px;
}
.quick .slim, .account .slim {
    width: 12px;
}
.title {
    flex: 1;
    margin: 0;
    padding-left: 65px;
    font-size: 12px;
    font-weight: normal;
    line-height: 23px;
    color: #111;
    white-space: nowrap;
}
.search {
    display: flex;
    width: 193px;
    background: #4a4a4a;
}
.search button {
    width: 13px;
    background: linear-gradient(#9a9a9a, #606060);
}
.search input {
    flex: 1;
    margin: 1px 1px 1px 0;
    padding-left: 2px;
    border: 1px solid #333;
    background: #757575;
    font-style: italic;
}
.search input::placeholder {
    color: #c8c8c8;
    opacity: 1;
}
.account {
    display: flex;
    align-items: center;
    width: 252px;
    background: linear-gradient(#5c5c5c, #989898 12%, #5f5f5f);
}
.account .sign-in {
    width: auto;
    gap: 5px;
    padding-left: 4px;
}
.account .push {
    margin-left: auto;
}
.account .push + button {
    margin-left: 4px;
}
.divider {
    width: 1px;
    height: 17px;
    margin: 0 6px 0 7px;
    background: #8c8c8c;
}
.account .help {
    width: 16px;
    height: 16px;
    margin: 0 4px 0 3px;
    border: 1px solid #222;
    border-radius: 8px;
    background: #f5f5f5;
    color: #1f4fa8;
    font-weight: bold;
}
.window-buttons {
    display: flex;
    align-items: flex-start;
    width: 123px;
    padding-left: 17px;
}
.window-buttons button {
    width: 28px;
    height: 18px;
    border: 1px solid #4c5654;
    border-top: none;
    background: linear-gradient(#c6cdca, #8e9997 45%, #7a8684);
}
.window-buttons .close {
    width: 47px;
    border-radius: 0 0 4px 0;
    background: linear-gradient(#e0a496, #cf5b41 45%, #b6391c);
}
.tabs {
    display: flex;
    align-items: stretch;
    padding-left: 6px;
    border-bottom: 1px solid #333;
}
.tabs a {
    padding: 1px 9px 0;
    line-height: 19px;
    color: #d2d2d2;
    text-decoration: none;
    white-space: nowrap;
}
.tabs .active {
    padding: 0 8px;
    border: 1px solid #333;
    border-bottom: none;
    background: linear-gradient(#757575, #5e5e5e);
    color: #fff;
}
.minimize {
    gap: 5px;
    margin-left: 14px;
}

/* ribbon */
.ribbon {
    display: grid;
    grid-template-columns: 131px 78px 95px 94px 145px 76px 146px 127px 171px 60px 61px 60px 1fr;
    height: 99px;
    padding: 1px 1px 1px 3px;
    border-bottom: 1px solid #8d8d8d;
    background: #3a3a3a;
}
.panel {
    display: flex;
    flex-direction: column;
    border-right: 1px solid #3a3a3a;
    background: #5e5e5e;
}
.body {
    flex: 1;
    display: flex;
    padding-top: 4px;
}
.panel h2 {
    display: flex;
    align-items: center;
    justify-content: center;
    gap: 6px;
    height: 18px;
    margin: 0;
    border-top: 1px solid #565656;
    background: linear-gradient(#484848, #575757);
    font-size: 12px;
    font-weight: normal;
    white-space: nowrap;
}
.panel .spread {
    display: grid;
    grid-template-columns: 1fr auto 1fr;
    padding: 0 3px;
}
.spread span {
    grid-column: 2;
}
.spread svg {
    justify-self: end;
}
.launcher {
    margin-left: 2px;
}
.big {
    flex-direction: column;
    justify-content: flex-start;
    padding-top: 2px;
    line-height: 15px;
}
.big svg {
    margin-bottom: 4px;
}
.big .caret {
    margin-top: 2px;
}
.modeling .big {
    width: 44px;
}
.modeling .big + .big {
    width: 57px;
}
.mesh .big {
    width: 52px;
}
.section .big {
    width: 76px;
    padding: 2px 12px;
}
.tools {
    display: grid;
    grid-auto-rows: 24px;
    align-content: start;
    justify-items: center;
}
.tools .start {
    justify-self: start;
}
.tools.one {
    grid-template-columns: 24px;
}
.modeling .one {
    margin-left: 3px;
}
.solid {
    grid-template-columns: 29px 27px 23px 12px;
}
.draw {
    grid-template-columns: 24px 25px 27px 12px;
    padding-left: 3px;
}
.modify {
    grid-template-columns: 27px 27px 24px 30px 21px 12px;
}
.coords {
    grid-template-columns: 24px 14px 26px 26px 25px 24px;
    padding-left: 3px;
}
.combo {
    display: flex;
    align-items: center;
    gap: 3px;
    height: 22px;
    padding: 0 4px 0 2px;
    border: 1px solid #2f2f2f;
    background: linear-gradient(#666, #4a4a4a);
}
.combo select {
    flex: 1;
    appearance: none;
}
.world {
    grid-column: 3 / 7;
    width: 100px;
    margin-top: 1px;
}
.view {
    flex-direction: column;
    gap: 2px;
    padding: 5px 2px 0;
}
.view-row {
    display: flex;
    align-items: center;
    gap: 5px;
    height: 22px;
    padding-left: 4px;
}
.selection .big {
    width: 50px;
}
.selection .big + .big {
    width: 62px;
}
.selection .gizmo.big {
    width: 50px;
    margin-left: 4px;
    padding: 2px 6px;
}
.gizmo-caret {
    margin-top: 54px;
    margin-left: -6px;
}
.folded {
    flex-direction: column;
    justify-content: flex-start;
    margin-left: 2px;
    padding-top: 5px;
    background: linear-gradient(#737373, #525252);
}
.folded svg {
    margin-bottom: 3px;
}
.folded .caret {
    margin-top: auto;
    margin-bottom: 4px;
}
.rest {
    margin-left: 1px;
    background: linear-gradient(#4e4e4e, #383838);
}

/* drawing tabs */
.doc-tabs {
    display: flex;
    align-items: flex-end;
    height: 30px;
    padding-left: 22px;
    border-bottom: 4px solid #5c5c5c;
}
.doc {
    position: relative;
    height: 22px;
    gap: 7px;
    padding: 0 10px;
    border-radius: 10px 10px 0 0;
    background: #5c5c5c;
    white-space: nowrap;
}
.start-tab {
    width: 122px;
    justify-content: flex-start;
    color: #bdbdbd;
}
.current {
    z-index: 1;
    margin-left: 1px;
    background: linear-gradient(#7e7e7e, #5c5c5c);
    color: #fff;
}
.doc::before, .doc::after {
    content: "";
    position: absolute;
    bottom: 0;
    width: 8px;
    height: 10px;
}
.doc::before {
    left: -8px;
    background: radial-gradient(circle at 0 0, transparent 8px, #5c5c5c 9px);
}
.doc::after {
    right: -8px;
    background: radial-gradient(circle at 100% 0, transparent 8px, #5c5c5c 9px);
}
.add {
    width: 22px;
    height: 14px;
    margin: 0 0 3px 8px;
    border-radius: 3px 10px 3px 10px;
    background: #505050;
}

/* canvas */
.workspace {
    position: relative;
    flex: 1;
    display: grid;
    grid-template-columns: 1fr 17px;
    grid-template-rows: 1fr 17px;
    min-height: 0;
    border-right: 8px solid #000;
    background: #f0f0f0;
}
.viewport {
    position: relative;
    overflow: hidden;
    border-right: 2px solid #dcdcf0;
    background: linear-gradient(#cacae2, #d0cfe7 50%, #969da5 50%, #757b82 55%, #575c64 62%, #44474e 66%, #3c4045 72%, #25282c 84%);
}
.scene {
    width: 100%;
    height: 100%;
}
.axis {
    font: 300 17px Lato, sans-serif;
}
.view-label {
    position: absolute;
    top: 6px;
    left: 4px;
    font-size: 11px;
    font-weight: 600;
    line-height: 16px;
    color: #fff;
}
.view-buttons {
    position: absolute;
    top: 9px;
    right: 7px;
    display: flex;
    gap: 6px;
}
.cube-area {
    position: absolute;
    top: 66px;
    right: 9px;
    display: flex;
    flex-direction: column;
    align-items: center;
}
.cube {
    width: 38px;
    height: 38px;
    border: 1px solid #8a8a92;
    background: linear-gradient(#dcdce2, #c2c2ca);
    color: #6c7484;
    font-size: 9px;
    font-weight: bold;
}
.cube span {
    line-height: 24px;
    background: #c8ccd6;
}
.wcs {
    position: absolute;
    top: 149px;
    right: 36px;
    gap: 6px;
    height: 17px;
    padding: 0 4px;
    border-radius: 3px;
    background: #dadaea;
    color: #8c8c98;
    font: 11px "Liberation Sans", sans-serif;
}
.navbar {
    position: absolute;
    top: 190px;
    right: 1px;
    display: flex;
    flex-direction: column;
    align-items: center;
    gap: 7px;
    width: 34px;
    height: 214px;
    padding: 1px 2px;
    border: 2px solid rgba(100, 100, 110, .5);
    border-radius: 5px;
    background: rgba(190, 190, 195, .35);
}
.navbar svg {
    fill: none;
    stroke: rgba(60, 60, 70, .4);
}
.navbar .dot {
    align-self: flex-end;
}
.navbar .dot svg {
    fill: rgba(80, 80, 90, .3);
    stroke: none;
}
.navbar .last {
    margin-top: auto;
}
.navbar .play {
    fill: rgba(50, 50, 55, .6);
}
.navbar .caret {
    border-top-color: rgba(70, 70, 80, .5);
}
.scroll {
    display: flex;
    align-items: center;
}
.vertical {
    flex-direction: column;
    padding: 7px 0;
}
.horizontal {
    padding: 0 6px;
}
.thumb {
    width: 15px;
    height: 15px;
    border: 1px solid #999;
    border-radius: 2px;
    background: linear-gradient(90deg, #fafafa, #d0d0d0);
}
.before { flex: 347; }
.after { flex: 132; }
.left { flex: 426; }
.right { flex: 880; }

/* floating command line */
.command {
    position: absolute;
    bottom: 1px;
    left: 315px;
    right: 306px;
    display: flex;
    height: 27px;
    border: 1px solid #777;
    border-radius: 3px;
    overflow: hidden;
}
.handle {
    display: flex;
    align-items: center;
    gap: 7px;
    width: 54px;
    padding-left: 2px;
    background: linear-gradient(#686868, #7c7c7c);
}
.handle button + button {
    margin-left: 2px;
}
.prompt {
    flex: 1;
    display: flex;
    align-items: center;
    gap: 4px;
    padding: 0 3px 0 4px;
    background: rgba(255, 255, 255, .7);
}
.prompt input {
    flex: 1;
    padding-left: 2px;
    font: italic 12px "DejaVu Sans Mono", monospace;
    color: #555;
}
.prompt input::placeholder {
    color: #a2a2a2;
    opacity: 1;
}

/* bottom bar */
.footer {
    position: relative;
    display: flex;
    justify-content: space-between;
    height: 29px;
    padding-left: 13px;
    overflow: hidden;
}
.layouts {
    display: flex;
    gap: 1px;
}
.layout {
    height: 18px;
    padding: 0 9px;
    border-radius: 0 0 10px 10px;
    background: #505050;
    color: #b0b0b0;
}
.model {
    padding: 0 10px;
    background: linear-gradient(#555, #838383);
    color: #fff;
    font-weight: bold;
}
.plus {
    width: 22px;
    height: 16px;
    margin-left: 4px;
    padding: 0;
    border-radius: 10px 3px 10px 3px;
}
.orb {
    position: absolute;
    top: 24px;
    left: 12px;
    width: 30px;
    height: 30px;
    border: 1px solid #2f6f9c;
    border-radius: 15px;
    background: #b9d8ea;
}
.status {
    display: flex;
    align-items: flex-start;
    gap: 1px;
}
.group {
    display: flex;
    align-items: center;
    justify-content: center;
    height: 27px;
    border: 1px solid #7a7a7a;
    background: #484848;
}
.joined {
    margin-left: -2px;
}
.group button {
    width: 24px;
    height: 24px;
}
.group .slim {
    width: 15px;
}
.group .space {
    width: 47px;
    color: #fff;
}
.group .ratio {
    width: 37px;
    gap: 4px;
    color: #bbb;
}
```
